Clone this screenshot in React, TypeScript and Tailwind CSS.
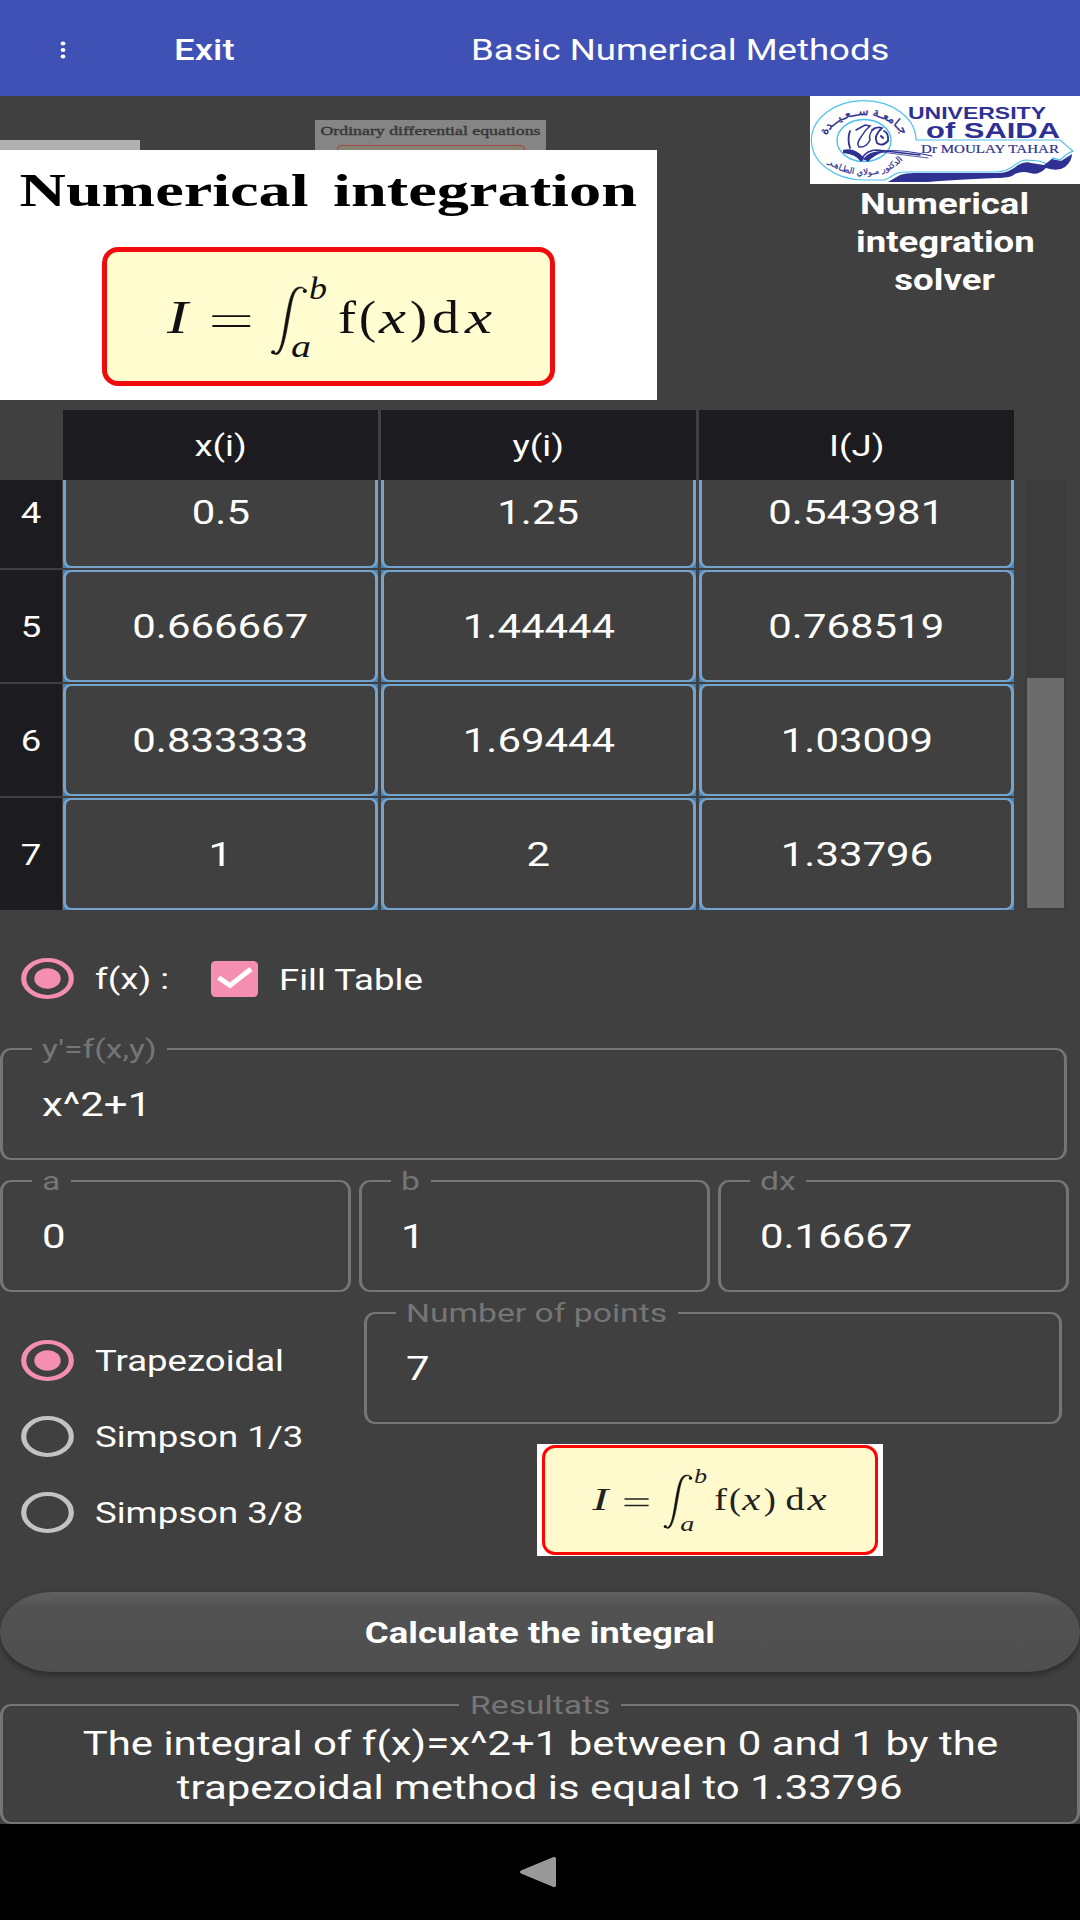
import type { ReactNode } from "react";

const SERIF = "'Liberation Serif', serif";

/* Horizontally stretched text run. */
function Wide({ children, className = "" }: { children: ReactNode; className?: string }) {
  return <span className={`inline-block whitespace-nowrap scale-x-[1.27] ${className}`}>{children}</span>;
}

function Radio({ on }: { on?: boolean }) {
  return (
    <svg className="ml-[21px] h-[41px] w-[53px] shrink-0" viewBox="0 0 41 41" preserveAspectRatio="none">
      <circle cx="20.5" cy="20.5" r="18.4" fill="none" stroke={on ? "#f48fb1" : "#c3c3c3"} strokeWidth="4" />
      {on && <circle cx="20.5" cy="20.5" r="10.2" fill="#f48fb1" />}
    </svg>
  );
}

function Choice({ on, label }: { on?: boolean; label: string }) {
  return (
    <div className="flex h-[76px] items-center">
      <Radio on={on} />
      <Wide className="ml-[21px] origin-left pt-[2px] text-[28.8px] leading-[38px]">{label}</Wide>
    </div>
  );
}

function Field({ label, gap, value, className }: { label: string; gap: string; value: string; className: string }) {
  return (
    <div className={`relative flex h-[112px] shrink-0 items-center rounded-[11px] border-x-[3px] border-y-2 border-[#757575] ${className}`}>
      <div className={`absolute -top-[19px] left-[29px] flex h-[36px] items-center bg-[#404040] ${gap}`}>
        <Wide className="ml-[10px] origin-left text-[26.500px] leading-[36px] text-[#757575]">{label}</Wide>
      </div>
      <Wide className="ml-[39px] origin-left pt-[2px] text-[33px] leading-[42px]">{value}</Wide>
    </div>
  );
}

const rows = [
  ["4", "0.5", "1.25", "0.543981"],
  ["5", "0.666667", "1.44444", "0.768519"],
  ["6", "0.833333", "1.69444", "1.03009"],
  ["7", "1", "2", "1.33796"],
];

function UniversityLogo() {
  return (
    <svg className="block h-[88px] w-[270px] bg-white" viewBox="0 0 270 88">
      <defs>
        <path id="ring-top" d="M13 52 A40 32 0 0 1 95 52" />
        <path id="ring-bottom" d="M9 50 A45 31 0 0 0 99 46" />
      </defs>
      <path
        d="M106 44 A52.3 39.7 0 1 0 53.5 84 H75 L82 80 Q87 76 95 76 H186 Q194 76 202 71 Q211 64 216 64 L229 65 L238 68 L243 62 L250 64 L257 58 L263 55 L250 44 H106"
        fill="none"
        stroke="#4fc0ec"
        strokeWidth="1.2"
      />
      <ellipse cx="54" cy="44.5" rx="27" ry="21" fill="none" stroke="#4fc0ec" strokeWidth="1.4" />
      <path
        d="M78 86 L90 79 Q95 77 105 77 H190 Q200 76 208 69 Q215 65 221 67 L234 69 L242 63 L251 65 L262 58 Q262 65 255 71 Q248 76 236 72 Q228 80 220 77 Q210 74 202 80 Q196 82 186 82 Q140 84 118 86 Z"
        fill="#2e3192"
      />
      <g fill="#2e3192" fontFamily="'DejaVu Sans', sans-serif">
        <text fontSize="12" textAnchor="middle" stroke="#2e3192" strokeWidth=".4">
          <textPath href="#ring-top" startOffset="50%">جـامعـة ســعـيــدة</textPath>
        </text>
        <text fontSize="8.500" textAnchor="middle" stroke="#2e3192" strokeWidth=".2">
          <textPath href="#ring-bottom" startOffset="50%">الدكتور مـولاي الطـاهـر</textPath>
        </text>
      </g>
      <g fill="none" stroke="#2e3192" strokeLinecap="round">
        <path d="M40 35 Q37 43 40 52" strokeWidth="1.8" />
        <path d="M46 34 L55 29 L60 30 Q55 34 51 41 Q46 48 49 51 Q56 52 60 44 Q58 37 65 32" strokeWidth="1.500" />
        <path d="M62 34 Q67 30 72 32 Q63 40 67 47 Q72 51 78 45 Q79 37 74 35" strokeWidth="1.800" />
        <path d="M71 40 L73 42" strokeWidth="2" />
        <path d="M52 62 Q57 54 67 54 L110 59" strokeWidth="1.6" />
        <path d="M54 64 Q61 57 74 55 Q92 53 122 60" strokeWidth="1" />
        <path d="M71 56 L118 62" strokeWidth=".8" />
      </g>
      <path d="M33 54 Q45 51 54 62 Q60 54 76 55 Q62 60 58 66 L54 63 L51 66 Q46 58 33 57Z" fill="#2e3192" />
      <g fill="#2e3192">
        <text x="98" y="22.7" fontSize="16.500" fontWeight="bold" fontFamily="'Liberation Sans', sans-serif" textLength="138" lengthAdjust="spacingAndGlyphs">
          UNIVERSITY
        </text>
        <text x="116" y="41.7" fontSize="22" fontWeight="bold" fontFamily="'Liberation Sans', sans-serif" textLength="134" lengthAdjust="spacingAndGlyphs">
          of SAIDA
        </text>
        <text x="111" y="56.7" fontSize="12.500" stroke="#2e3192" strokeWidth=".2" fontFamily={SERIF} textLength="138" lengthAdjust="spacingAndGlyphs">
          Dr MOULAY TAHAR
        </text>
      </g>
    </svg>
  );
}

function IntegralSign() {
  return (
    <>
      <path
        d="M36 4.2 Q33 .2 29.5 1 C23 3 21.5 14 19 28 C16 45 13.5 61 8.5 66.5 Q5.5 69 2 66 Q5.5 67.5 8 64 C12 57 13.5 42 16 28 C19 12 21 3 27 .4 Q33 -1.2 36 4.2Z"
        fill="#111"
        stroke="#111"
        strokeWidth=".6"
      />
      <circle cx="34.3" cy="4" r="2" fill="#111" />
      <circle cx="2.6" cy="65.2" r="2" fill="#111" />
    </>
  );
}

function MainFormula() {
  return (
    <svg className="block h-full w-full" viewBox="107 252 443 129" preserveAspectRatio="none" fontFamily={SERIF} fill="#111">
      <g fontSize="46" fontStyle="italic">
        <text x="167" y="332.500" textLength="21" lengthAdjust="spacingAndGlyphs">I</text>
        <text x="379" y="332.500" textLength="27" lengthAdjust="spacingAndGlyphs">x</text>
        <text x="465" y="332.500" textLength="27" lengthAdjust="spacingAndGlyphs">x</text>
      </g>
      <path d="M213 316.2H249.500M213 326H249.500" stroke="#111" strokeWidth="1.8" strokeLinecap="round" />
      <g transform="translate(270.500 287)">
        <IntegralSign />
      </g>
      <g fontSize="31" fontStyle="italic">
        <text x="309" y="299" textLength="18" lengthAdjust="spacingAndGlyphs">b</text>
        <text x="291" y="357" textLength="20" lengthAdjust="spacingAndGlyphs">a</text>
      </g>
      <g fontSize="46">
        <text x="338" y="332.500" textLength="18" lengthAdjust="spacingAndGlyphs">f</text>
        <text x="359" y="332.500" textLength="17" lengthAdjust="spacingAndGlyphs">(</text>
        <text x="410" y="332.500" textLength="17" lengthAdjust="spacingAndGlyphs">)</text>
        <text x="432" y="332.500" textLength="27" lengthAdjust="spacingAndGlyphs">d</text>
      </g>
    </svg>
  );
}

function SmallFormula() {
  return (
    <svg className="block h-full w-full" viewBox="546 1448 328 104" preserveAspectRatio="none" fontFamily={SERIF} fill="#222">
      <g fontSize="31" fontStyle="italic">
        <text x="593" y="1509.800" textLength="16" lengthAdjust="spacingAndGlyphs">I</text>
        <text x="742" y="1509.800" textLength="18" lengthAdjust="spacingAndGlyphs">x</text>
        <text x="807" y="1509.800" textLength="19" lengthAdjust="spacingAndGlyphs">x</text>
      </g>
      <path d="M625 1499H649M625 1505.500H649" stroke="#222" strokeWidth="1.400" />
      <g transform="translate(663.500 1475) scale(.79 .79)">
        <IntegralSign />
      </g>
      <g fontSize="20" fontStyle="italic">
        <text x="694" y="1483" textLength="13" lengthAdjust="spacingAndGlyphs">b</text>
        <text x="680.500" y="1531" textLength="14" lengthAdjust="spacingAndGlyphs">a</text>
      </g>
      <g fontSize="31">
        <text x="714" y="1509.800" textLength="13" lengthAdjust="spacingAndGlyphs">f</text>
        <text x="729" y="1509.800" textLength="12" lengthAdjust="spacingAndGlyphs">(</text>
        <text x="763.500" y="1509.800" textLength="12" lengthAdjust="spacingAndGlyphs">)</text>
        <text x="785" y="1509.800" textLength="19" lengthAdjust="spacingAndGlyphs">d</text>
      </g>
    </svg>
  );
}

export default function App() {
  return (
    <div className="flex h-[1920px] w-[1080px] flex-col overflow-hidden bg-[#404040] font-['Roboto',sans-serif] text-white">
      <header className="flex h-[96px] shrink-0 items-center bg-[#3f51b5] pt-[3px]">
        <svg className="ml-[60px] h-[18px] w-[6px]" viewBox="0 0 6 18" fill="#fff">
          <ellipse cx="3" cy="2.500" rx="2.400" ry="1.900" />
          <ellipse cx="3" cy="9" rx="2.400" ry="1.900" />
          <ellipse cx="3" cy="15.500" rx="2.400" ry="1.900" />
        </svg>
        <div className="ml-[108px] w-[297px]">
          <Wide className="origin-left text-[28.800px] leading-[36px] font-medium">Exit</Wide>
        </div>
        <Wide className="origin-left text-[28.800px] leading-[36px]">Basic Numerical Methods</Wide>
      </header>

      <section className="flex h-[314px] shrink-0 justify-between">
        <div className="relative h-[304px] w-[657px] pt-[54px]">
          <div className="absolute top-[44px] left-0 h-[10px] w-[140px] bg-[#b0b0b0]" />
          <div className="absolute top-[24px] left-[315px] h-[30px] w-[231px] overflow-hidden bg-[#858585]">
            <svg className="block h-[25px] w-[231px]" viewBox="0 0 231 25">
              <text x="5.500" y="15" fontSize="12.500" fontFamily={SERIF} fill="#383838" stroke="#383838" strokeWidth=".4" textLength="220" lengthAdjust="spacingAndGlyphs">
                Ordinary differential equations
              </text>
            </svg>
            <div className="mx-auto h-[20px] w-[188px] rounded-[4px] border border-[#a34848] bg-[#85836f]" />
          </div>
          <div className="relative flex h-[250px] flex-col bg-white">
            <svg className="block h-[97px] w-[657px] shrink-0" viewBox="0 0 657 97" fontSize="46" fontWeight="bold" fontFamily={SERIF}>
              <text x="19.500" y="56" textLength="289" lengthAdjust="spacingAndGlyphs">Numerical</text>
              <text x="333" y="56" textLength="304" lengthAdjust="spacingAndGlyphs">integration</text>
            </svg>
            <div className="ml-[102px] h-[139px] w-[453px] rounded-[16px] border-5 border-[#f00c0c] bg-[#fffcd0]">
              <MainFormula />
            </div>
          </div>
        </div>
        <div className="w-[270px]">
          <UniversityLogo />
          <div className="flex flex-col items-center pt-[1px] text-[28.800px] leading-[38px] font-bold">
            <Wide>Numerical</Wide>
            <Wide>integration</Wide>
            <Wide>solver</Wide>
          </div>
        </div>
      </section>

      <section className="flex h-[500px] shrink-0">
        <div className="w-[1014px]">
          <div className="ml-[63px] flex h-[70px] gap-[3px]">
            {["x(i)", "y(i)", "I(J)"].map((h) => (
              <div key={h} className="flex w-[315px] items-center justify-center bg-[#1c1b1f] pt-[2px]">
                <Wide className="text-[28.800px] leading-[36px]">{h}</Wide>
              </div>
            ))}
          </div>
          <div className="flex h-[430px] flex-col justify-end gap-[2px] overflow-hidden">
            {rows.map(([n, ...cells]) => (
              <div key={n} className="flex h-[112px] shrink-0">
                <div className="mr-[1px] flex w-[62px] items-center justify-center bg-[#1c1b1f] pt-[2px]">
                  <Wide className="text-[28.800px] leading-[36px]">{n}</Wide>
                </div>
                <div className="flex gap-[3px]">
                  {cells.map((c, i) => (
                    <div key={i} className="w-[315px] bg-[#4682b4]">
                      <div className="flex h-full items-center justify-center rounded-[8px] border-x-[3px] border-y-2 border-[#74a4cc] bg-[#404040] pt-[2px]">
                        <Wide className="text-[33px] leading-[42px]">{c}</Wide>
                      </div>
                    </div>
                  ))}
                </div>
              </div>
            ))}
          </div>
        </div>
        <div className="mt-[70px] ml-[11px] flex h-[430px] w-[42px] flex-col items-start justify-end bg-[#3c3c3c] pb-[2px] pl-[2px]">
          <div className="h-[230px] w-[37px] bg-[#6c6c6c]" />
        </div>
      </section>

      <section className="flex h-[136px] shrink-0 items-center">
        <Radio on />
        <div className="ml-[21px] w-[116px] pt-[1px]">
          <Wide className="origin-left text-[28.800px] leading-[38px]">f(x) :</Wide>
        </div>
        <svg className="mt-[2px] h-[36px] w-[47px] shrink-0" viewBox="0 0 47 36">
          <rect width="47" height="36" rx="4.500" fill="#f48fb1" />
          <path d="M7.500 16.500L19 24.500L40 8" fill="none" stroke="#fff" strokeWidth="5" />
        </svg>
        <Wide className="ml-[21px] origin-left pt-[3px] text-[28.800px] leading-[38px]">Fill Table</Wide>
      </section>

      <Field label="y'=f(x,y)" gap="w-[135px]" value="x^2+1" className="mt-[2px] w-[1067px]" />

      <div className="mt-[20px] flex shrink-0 gap-[8px]">
        <Field label="a" gap="w-[39px]" value="0" className="w-[351px]" />
        <Field label="b" gap="w-[40px]" value="1" className="w-[351px]" />
        <Field label="dx" gap="w-[56px]" value="0.16667" className="w-[351px]" />
      </div>

      <section className="mt-[20px] flex h-[280px] shrink-0">
        <div className="w-[364px] pt-[10px]">
          <Choice on label="Trapezoidal" />
          <Choice label="Simpson 1/3" />
          <Choice label="Simpson 3/8" />
        </div>
        <div>
          <Field label="Number of points" gap="w-[282px]" value="7" className="w-[698px]" />
          <div className="mt-[20px] ml-[173px] h-[112px] w-[346px] bg-white px-[5px] py-[1px]">
            <div className="h-full rounded-[13px] border-[3.5px] border-[#ff0500] bg-[#fffacd]">
              <SmallFormula />
            </div>
          </div>
        </div>
      </section>

      <button className="flex h-[80px] shrink-0 items-center justify-center rounded-[52px/40px] bg-[#505050] bg-linear-to-b from-[#606060] via-[#525252] via-20% to-[#4f4f4f] pt-[1px] shadow-[0_3px_6px_rgba(0,0,0,0.35)]">
        <Wide className="text-[28.800px] leading-[36px] font-bold">Calculate the integral</Wide>
      </button>

      <div className="relative mt-[32px] flex h-[120px] shrink-0 flex-col items-center justify-center rounded-[11px] border-x-[3px] border-y-2 border-[#757575] pt-[3px]">
        <div className="absolute -top-[19px] left-[456px] flex h-[36px] w-[162px] items-center justify-center bg-[#404040]">
          <Wide className="text-[26.500px] leading-[36px] text-[#757575]">Resultats</Wide>
        </div>
        <Wide className="text-[33px] leading-[44px]">The integral of f(x)=x^2+1 between 0 and 1 by the</Wide>
        <Wide className="text-[33px] leading-[44px]">trapezoidal method is equal to 1.33796</Wide>
      </div>

      <nav className="flex h-[96px] shrink-0 items-center justify-center bg-black">
        <svg className="mr-[5px] h-[34px] w-[38px]" viewBox="0 0 38 34">
          <path d="M2 15.500L34.500 2Q37 1.500 37 3.500V30.500Q37 32.500 34.500 32L2 18.500Q0 17 2 15.500Z" fill="#999" />
        </svg>
      </nav>
    </div>
  );
}
